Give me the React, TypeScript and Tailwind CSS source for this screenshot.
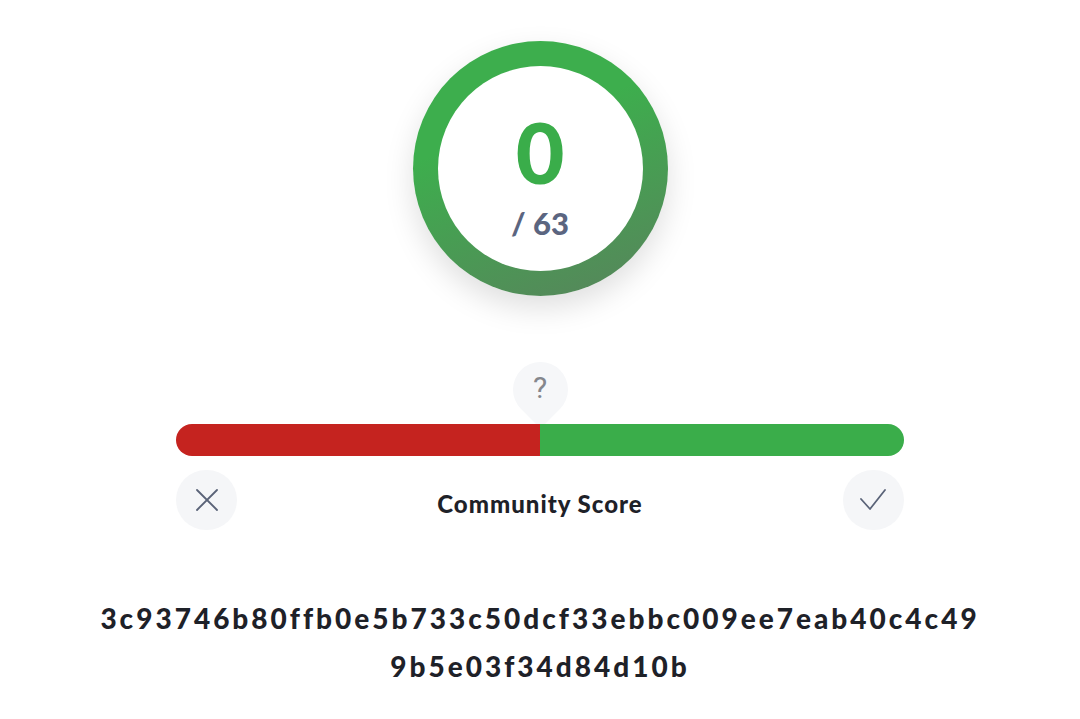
import React from "react";

export default function App() {
  return (
    <div
      className="w-[1080px] h-[719px] bg-white flex flex-col items-center overflow-hidden"
      style={{ fontFamily: "Lato, 'Noto Sans', sans-serif" }}
    >
      {/* Score ring */}
      <div className="mt-[41px] w-[255px] h-[255px] rounded-full p-[25px] bg-[linear-gradient(160deg,#3dae4d_35%,#58835c_100%)] shadow-[0_12px_30px_rgba(0,0,0,0.13)] flex">
        <div className="flex-1 rounded-full bg-white flex flex-col items-center">
          <div className="mt-[44px] text-[84px] leading-[84px] font-black text-[#3aad4a]">0</div>
          <div className="mt-[11px] text-[31px] leading-[36px] font-black text-[#5b6580]">/ 63</div>
        </div>
      </div>

      {/* Bubble */}
      <div className="mt-[66px] relative w-[728px] flex flex-col items-center">
        <div className="relative w-[55px] h-[55px] flex justify-center">
          <div className="absolute top-0 left-0 w-[55px] h-[55px] rotate-45 rounded-tl-full rounded-tr-full rounded-bl-full bg-[#f6f7f9]" />
          <span
            className="relative mt-[9px] text-[30px] leading-[34px] text-[#85878d]"
            style={{ fontFamily: "Roboto, sans-serif" }}
          >
            ?
          </span>
        </div>

        {/* Bar */}
        <div className="relative mt-[7px] w-[728px] h-[32px] rounded-full overflow-hidden flex">
          <div className="flex-1 bg-[#c5231f]" />
          <div className="flex-1 bg-[#3aad4a]" />
        </div>

        {/* Controls */}
        <div className="mt-[14px] w-[728px] flex items-center justify-between">
          <button className="w-[61px] h-[60px] rounded-full bg-[#f5f6f8] flex items-center justify-center">
            <svg width="24" height="24" viewBox="0 0 24 24" fill="none" stroke="#5a6378" strokeWidth="1.8" strokeLinecap="round">
              <path d="M2 2 L22 22 M22 2 L2 22" />
            </svg>
          </button>
          <div className="mt-[8px] text-[24px] font-black tracking-[1px] text-[#1e2128]">Community Score</div>
          <button className="w-[61px] h-[60px] rounded-full bg-[#f5f6f8] flex items-center justify-center">
            <svg width="28" height="24" viewBox="0 0 28 24" fill="none" stroke="#5a6378" strokeWidth="1.8" strokeLinecap="round" strokeLinejoin="round">
              <path d="M2 11 L11 21 L26 2" />
            </svg>
          </button>
        </div>
      </div>

      {/* Hash */}
      <div className="mt-[63px] text-[28px] leading-[50px] font-black text-[#1e2128] tracking-[3px] text-center">
        <div>3c93746b80ffb0e5b733c50dcf33ebbc009ee7eab40c4c49</div>
        <div className="-mt-[2px]">9b5e03f34d84d10b</div>
      </div>
    </div>
  );
}
